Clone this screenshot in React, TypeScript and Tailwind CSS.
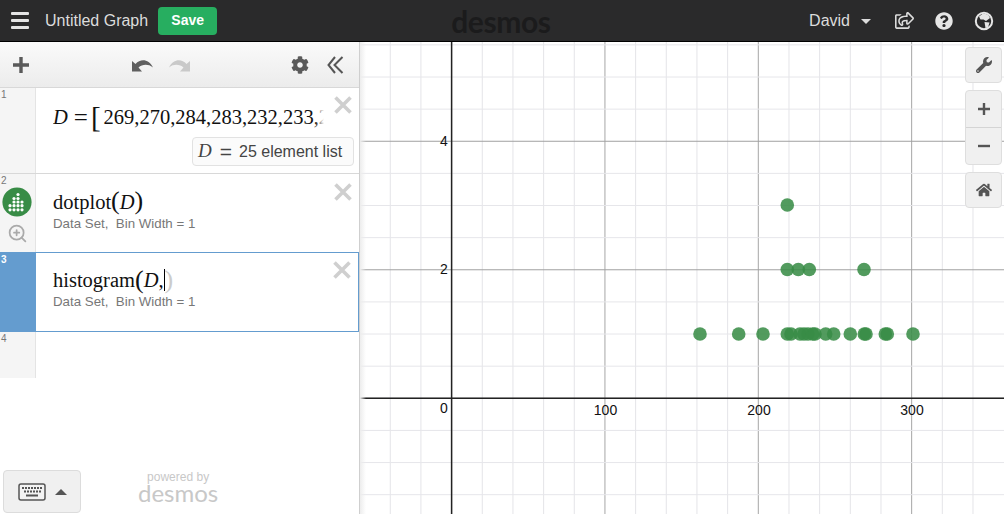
import React from 'react';
import { ZoomIn } from 'lucide-react';
import { FaCog, FaHome, FaQuestionCircle, FaRegShareSquare, FaWrench } from 'react-icons/fa';

const xLines = Array.from({ length: 21 }, (_, i) => 451.6 + (i - 3) * 30.67);
const yLines = Array.from({ length: 18 }, (_, i) => 398.3 + (i - 14) * 32.13);

const points: [number, number][] = [
  [700, 334], [738.7, 334], [763, 334], [787.3, 334], [791, 334], [800, 334], [804, 334], [808, 334], [812.7, 334],
  [815, 334], [825.7, 334], [833.7, 334], [850.3, 334], [864.3, 334], [866, 334], [885.3, 334], [887.3, 334], [913, 334],
  [787.3, 269.5], [798.3, 269.5], [809.3, 269.5], [864, 269.5], [787.3, 205],
];

const labelClass = 'fill-[#111] text-[14px] [font-family:"Liberation_Sans",sans-serif]';

const Graph = () => (
  <svg viewBox="360 42 644 472" className="block h-full w-full">
    {xLines.map((x, i) => {
      const major = (i - 3) % 5 === 0;
      return <line key={x} x1={x} x2={x} y1={42} y2={514} stroke={major ? '#a6a6a6' : '#e4e4e8'} strokeWidth={1} />;
    })}
    {yLines.map((y, i) => {
      const major = (i - 14) % 4 === 0;
      return <line key={y} x1={360} x2={1004} y1={y} y2={y} stroke={major ? '#a0a0a0' : '#e6e6ea'} strokeWidth={1} />;
    })}
    <line x1={451.6} x2={451.6} y1={42} y2={514} stroke="#222" strokeWidth={1.5} />
    <line x1={360} x2={1004} y1={398.3} y2={398.3} stroke="#222" strokeWidth={1.5} />
    {points.map(([x, y], i) => (
      <circle key={i} cx={x} cy={y} r={6.8} fill="#388c46" fillOpacity={0.87} />
    ))}
    <text x={444} y={146} textAnchor="middle" className={labelClass}>4</text>
    <text x={444} y={274} textAnchor="middle" className={labelClass}>2</text>
    <text x={444} y={413} textAnchor="middle" className={labelClass}>0</text>
    <text x={605.5} y={415} textAnchor="middle" className={labelClass}>100</text>
    <text x={759} y={415} textAnchor="middle" className={labelClass}>200</text>
    <text x={912} y={415} textAnchor="middle" className={labelClass}>300</text>
  </svg>
);

const dots = [
  [16, 7.5], [16, 11.5], [12, 11.5], [12, 15], [16, 15], [20, 15],
  [8, 18.7], [12, 18.7], [16, 18.7], [20, 18.7], [8, 22.8], [12, 22.8], [16, 22.8], [20, 22.8],
];

const DotplotIcon = () => (
  <svg viewBox="0 0 30 30" className="h-[30px] w-[30px]">
    <circle cx={15} cy={15} r={14.6} fill="#388c46" />
    {dots.map(([x, y]) => (
      <circle key={`${x}-${y}`} cx={x} cy={y} r={1.6} fill="#fff" />
    ))}
  </svg>
);

const KeyboardIcon = () => (
  <svg viewBox="0 0 28 18" className="h-[18px] w-[28px]">
    <rect x={1} y={1} width={26} height={16} rx={2} fill="#f3f3f3" stroke="#555" strokeWidth={1.5} />
    {[4, 7, 10, 13, 16, 19, 22].map((x) => <rect key={x} x={x} y={4} width={2} height={2} fill="#555" />)}
    {[6, 9, 12, 15, 18, 21].map((x) => <rect key={x} x={x} y={7.5} width={2} height={2} fill="#555" />)}
    <rect x={8} y={11.5} width={12} height={2} fill="#555" />
  </svg>
);

const UndoIcon = ({ className }: { className: string }) => (
  <svg viewBox="0 0 22 14" className={`h-[14px] w-[22px] ${className}`}>
    <path d="M0 3 L0 13.5 L10 13.5 L6.5 9.5 C10 6.5 16 5.5 21 9.5 C17 1.5 9 0 3.5 6 Z" fill="currentColor" />
  </svg>
);

const GlobeIcon = () => (
  <svg viewBox="0 0 20 20" className="ml-[21px] mr-[10px] h-[20px] w-[20px]">
    <circle cx={10} cy={10} r={8.2} fill="none" stroke="#e6e6e6" strokeWidth={2} />
    <path d="M5 5.5 L9 2.5 L14 3.5 L16 7 L12 10 L9.5 8.5 L6.5 8.5 Z" fill="#e6e6e6" />
    <path d="M10.5 11 L15.5 11.5 L14 16.5 L11.5 17 Z" fill="#e6e6e6" />
  </svg>
);

const CloseX = ({ className }: { className: string }) => (
  <svg viewBox="0 0 20 20" className={`absolute right-[6px] h-[20px] w-[20px] ${className}`}>
    <path d="M2.5 2.5 17.5 17.5M17.5 2.5 2.5 17.5" stroke="#cfcfcf" strokeWidth={3.6} />
  </svg>
);

const Caption = () => (
  <div className="mt-px text-[13.3px] leading-[16px] text-[#777]">Data Set,&nbsp; Bin Width = 1</div>
);

const mathClass = 'whitespace-nowrap text-[20.5px] leading-[26px] text-[#111] [font-family:"Liberation_Serif",serif]';

export default function App() {
  return (
    <div className="flex h-[514px] w-[1004px] flex-col overflow-hidden bg-white [font-family:'Liberation_Sans',sans-serif]">
      <header className="flex h-[42px] shrink-0 items-center border-b border-black bg-[#2a2a2b] text-[#e6e6e6]">
        <div className="ml-[11px] flex w-[18px] flex-col gap-[4px]">
          <span className="h-[3px] rounded-[1px] bg-[#e4e4e4]" />
          <span className="h-[3px] rounded-[1px] bg-[#e4e4e4]" />
          <span className="h-[3px] rounded-[1px] bg-[#e4e4e4]" />
        </div>
        <span className="ml-[16px] text-[16px] text-[#dcdcdc]">Untitled Graph</span>
        <button className="ml-[10px] h-[28px] w-[59px] rounded-[4px] bg-[#27ae60] text-[14px] font-bold text-white">Save</button>
        <span className="ml-[234px] text-[30px] font-bold leading-none tracking-[-0.4px] text-[#1b1b1c] [font-family:Lato,sans-serif]">desmos</span>
        <span className="ml-auto text-[16px] text-[#dcdcdc]">David</span>
        <span className="ml-[11px] mt-[2px] h-0 w-0 border-x-[5px] border-t-[5px] border-x-transparent border-t-[#dcdcdc]" />
        <FaRegShareSquare className="ml-[24px] text-[19px] text-[#dcdcdc]" />
        <FaQuestionCircle className="ml-[21px] text-[18px] text-[#e6e6e6]" />
        <GlobeIcon />
      </header>

      <div className="flex min-h-0 flex-1">
        <aside className="flex w-[360px] shrink-0 flex-col border-r border-[#cfcfcf] bg-white">
          <div className="flex h-[46px] shrink-0 items-center border-b border-[#d8d8d8] bg-gradient-to-b from-[#fafafa] to-[#ececec] text-[#5a5a5a]">
            <svg viewBox="0 0 18 18" className="ml-[12px] h-[18px] w-[18px]">
              <path d="M9 1v16M1 9h16" stroke="#5a5a5a" strokeWidth={3.4} />
            </svg>
            <UndoIcon className="ml-[102px] text-[#5f5f5f]" />
            <UndoIcon className="ml-[14px] -scale-x-100 text-[#c9c9c9]" />
            <FaCog className="ml-[101px] text-[18px]" />
            <svg viewBox="0 0 18 18" className="ml-[18px] h-[18px] w-[18px]">
              <path d="M8 1 1.5 9 8 17M15.5 1 7.5 9 15.5 17" fill="none" stroke="#555" strokeWidth={2} />
            </svg>
          </div>

          <div className="flex h-[86px] shrink-0 border-b border-[#d8d8d8]">
            <div className="w-[36px] shrink-0 border-r border-[#e4e4e4] bg-[#f5f5f5] pl-[1px] text-[10px] leading-[14px] text-[#777]">1</div>
            <div className="relative min-w-0 flex-1 pl-[17px] pt-[13px]">
              <div className={`${mathClass} flex h-[32px] w-[271px] items-center overflow-hidden`}>
                <i>D</i>
                <span className="ml-[6px] mr-[3px] text-[25px] leading-none">=</span>
                <span className="mr-[3px] text-[29px] leading-[32px]">[</span>
                <span>269,270,284,283,232,233,2</span>
              </div>
              <div className="absolute left-[279px] top-[16px] h-[26px] w-[9px] bg-gradient-to-r from-transparent to-white" />
              <CloseX className="top-[7px]" />
              <div className="absolute right-[5px] top-[49px] flex h-[29px] w-[162px] items-center rounded-[4px] border border-[#e2e2e2] bg-[#fbfbfb] pl-[5px] text-[16px] text-[#444]">
                <i className="text-[19px] [font-family:'Liberation_Serif',serif]">D</i>
                <span className="ml-[8px] text-[21px] leading-none">=</span>
                <span className="ml-[7px]">25 element list</span>
              </div>
            </div>
          </div>

          <div className="flex h-[79px] shrink-0 border-b border-[#d8d8d8]">
            <div className="flex w-[36px] shrink-0 flex-col items-center border-r border-[#e4e4e4] bg-[#f5f5f5] pr-[1px] text-[#aaa]">
              <span className="w-full pl-[1px] text-[10px] leading-[13px] text-[#777]">2</span>
              <DotplotIcon />
              <ZoomIn className="mt-[6px]" size={21} strokeWidth={2} />
            </div>
            <div className="relative min-w-0 flex-1 pl-[17px] pt-[14px]">
              <div className={mathClass}>dotplot<span className="text-[26px]">(</span><i>D</i><span className="text-[26px]">)</span></div>
              <Caption />
              <CloseX className="top-[8px]" />
            </div>
          </div>

          <div className="-mt-px flex h-[80px] shrink-0 border border-[#649ccf]">
            <div className="w-[35px] shrink-0 bg-[#649ccf] text-[10px] font-bold leading-[14px] text-white">3</div>
            <div className="relative min-w-0 flex-1 pl-[17px] pt-[14px]">
              <div className={`${mathClass} flex items-center`}>
                histogram<span className="text-[26px]">(</span><i>D</i>,
                <span className="h-[22px] w-px bg-black" />
                <span className="text-[26px] text-[#ccc]">)</span>
              </div>
              <Caption />
              <CloseX className="top-[7px]" />
            </div>
          </div>

          <div className="flex h-[46px] shrink-0">
            <div className="w-[36px] shrink-0 border-r border-[#e4e4e4] bg-[#f5f5f5] pl-[1px] text-[10px] leading-[14px] text-[#777]">4</div>
          </div>

          <div className="mt-auto flex items-end pb-px pl-[3px]">
            <div className="flex h-[43px] w-[78px] items-center justify-center gap-[9px] rounded-[4px] border border-[#dcdcdc] bg-[#f0f0f0]">
              <KeyboardIcon />
              <span className="h-0 w-0 border-x-[6px] border-b-[6px] border-x-transparent border-b-[#555]" />
            </div>
            <div className="mb-[11px] ml-[57px] flex flex-col items-center text-[#c8c8c8]">
              <span className="text-[12px] leading-[13px]">powered by</span>
              <span className="text-[24px] leading-[18px] [font-family:Lato,sans-serif]">desmos</span>
            </div>
          </div>
        </aside>

        <main className="relative min-w-0 flex-1 bg-white">
          <Graph />
          <div className="absolute inset-y-0 left-0 w-[6px] bg-gradient-to-r from-[#ededed] to-transparent" />
          <div className="absolute right-[2px] top-[5px] flex w-[37px] flex-col gap-[7px] text-[#555]">
            <div className="flex h-[36px] items-center justify-center rounded-[4px] border border-[#dedede] bg-[#f0f0f0]">
              <FaWrench className="text-[16px]" />
            </div>
            <div className="flex h-[75px] flex-col rounded-[4px] border border-[#dedede] bg-[#f0f0f0]">
              <div className="flex flex-1 items-center justify-center border-b border-[#d4d4d4]">
                <svg viewBox="0 0 12 12" className="h-[12px] w-[12px]"><path d="M6 0v12M0 6h12" stroke="#555" strokeWidth={2.4} /></svg>
              </div>
              <div className="flex flex-1 items-center justify-center">
                <svg viewBox="0 0 12 12" className="h-[12px] w-[12px]"><path d="M0 6h12" stroke="#555" strokeWidth={2.4} /></svg>
              </div>
            </div>
            <div className="flex h-[36px] items-center justify-center rounded-[4px] border border-[#dedede] bg-[#f0f0f0]">
              <FaHome className="text-[16px]" />
            </div>
          </div>
        </main>
      </div>
    </div>
  );
}
